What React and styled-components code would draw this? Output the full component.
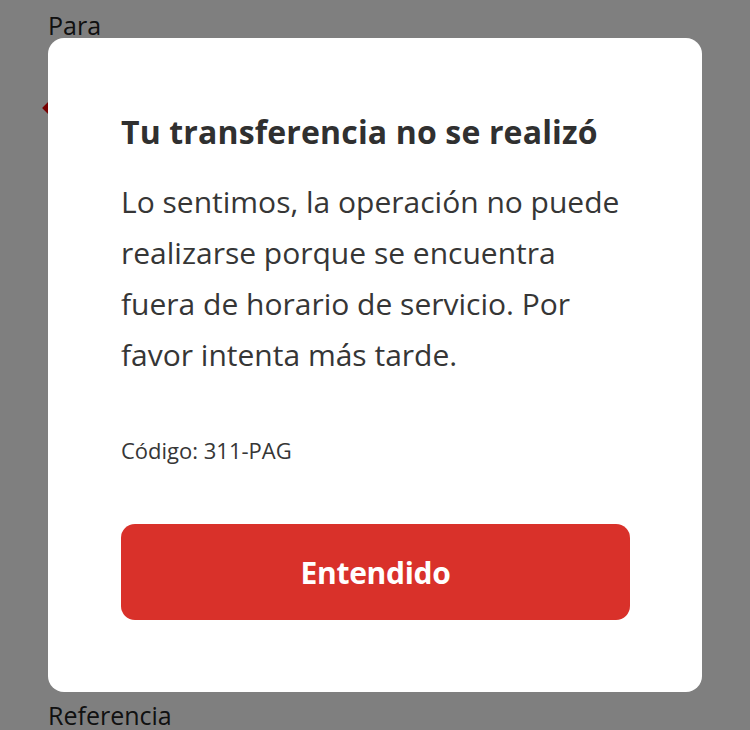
import React from "react";
import styled, { createGlobalStyle } from "styled-components";

const Global = createGlobalStyle`
  html, body { margin: 0; padding: 0; background: #ffffff; }
  body { font-family: "Open Sans", "Noto Sans", sans-serif; }
  * { box-sizing: border-box; }
`;

const Page = styled.div`
  min-height: 730px;
  display: flex;
  flex-direction: column;
  justify-content: space-between;
  padding: 0 48px;
`;

const FieldLabel = styled.div`
  font-size: 25px;
  line-height: 34px;
  color: #222222;
  padding-top: ${(p) => p.$top || 0}px;
  margin-bottom: ${(p) => p.$bottom || 0}px;
`;

const Section = styled.div`
  display: flex;
  flex-direction: column;
`;

const MarkerRow = styled.div`
  display: flex;
  align-items: center;
  height: 30px;
  margin-top: 51px;
  margin-left: -3px;
`;

const Diamond = styled.span`
  width: 14px;
  height: 14px;
  background: #ec0000;
  transform: rotate(45deg);
`;

const Overlay = styled.div`
  position: fixed;
  inset: 0;
  background: rgba(0, 0, 0, 0.5);
  display: flex;
  align-items: center;
  justify-content: center;
`;

const Modal = styled.div`
  width: 654px;
  background: #ffffff;
  border-radius: 16px;
  padding: 74px 72px 72px 73px;
  display: flex;
  flex-direction: column;
`;

const Title = styled.h2`
  margin: 0;
  font-size: 32px;
  line-height: 40px;
  font-weight: 700;
  color: #303030;
  letter-spacing: 0.15px;
`;

const Message = styled.p`
  margin: 24px 0 0;
  font-size: 30px;
  line-height: 51px;
  font-weight: 400;
  color: #363636;
`;

const Code = styled.div`
  margin-top: 56px;
  font-size: 22px;
  line-height: 28px;
  color: #363636;
`;

const Button = styled.button`
  margin-top: 60px;
  height: 96px;
  width: 100%;
  border: none;
  border-radius: 14px;
  background: #d9312a;
  color: #ffffff;
  font-family: "Open Sans", "Noto Sans", sans-serif;
  font-size: 30px;
  font-weight: 700;
  letter-spacing: -0.3px;
  cursor: pointer;
`;

export default function App() {
  return (
    <>
      <Global />
      <Page>
        <Section>
          <FieldLabel $top={8}>Para</FieldLabel>
          <MarkerRow>
            <Diamond />
          </MarkerRow>
        </Section>
        <FieldLabel $bottom={-2}>Referencia</FieldLabel>
      </Page>
      <Overlay>
        <Modal role="dialog" aria-modal="true">
          <Title>Tu transferencia no se realizó</Title>
          <Message>
            Lo sentimos, la operación no puede realizarse porque se encuentra
            fuera de horario de servicio. Por favor intenta más tarde.
          </Message>
          <Code>Código: 311-PAG</Code>
          <Button>Entendido</Button>
        </Modal>
      </Overlay>
    </>
  );
}
